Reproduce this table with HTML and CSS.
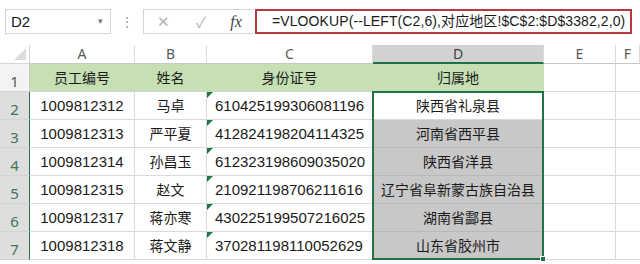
FILE: index.html
```html
<!DOCTYPE html>
<html lang="zh-CN">
<head>
    <meta charset="UTF-8">
    <title>对应地区查询</title>
    <link rel="stylesheet" href="styles.css">
</head>
<body>
<div class="toolbar">
    <div class="name-box">D2<span class="caret">▾</span></div>
    <div class="grip">⋮</div>
    <div class="fx-box">
        <span class="fx-btn">✕</span>
        <span class="fx-btn">✓</span>
        <span class="fx-label">fx</span>
    </div>
    <div class="formula">=VLOOKUP(--LEFT(C2,6),对应地区!$C$2:$D$3382,2,0)</div>
</div>

<div class="sheet">
    <div class="corner"><span class="tri"></span></div>
    <div class="col-head">A</div>
    <div class="col-head">B</div>
    <div class="col-head">C</div>
    <div class="col-head sel">D</div>
    <div class="col-head">E</div>
    <div class="col-head last">F</div>

    <div class="row-head">1</div>
    <div class="cell title cn">员工编号</div>
    <div class="cell title cn">姓名</div>
    <div class="cell title cn">身份证号</div>
    <div class="cell title cn">归属地</div>
    <div class="cell"></div>
    <div class="cell last"></div>

    <div class="row-head sel">2</div>
    <div class="cell num">1009812312</div>
    <div class="cell cn">马卓</div>
    <div class="cell id">610425199306081196</div>
    <div class="cell cn active">陕西省礼泉县</div>
    <div class="cell"></div>
    <div class="cell last"></div>

    <div class="row-head sel">3</div>
    <div class="cell num">1009812313</div>
    <div class="cell cn">严平夏</div>
    <div class="cell id">412824198204114325</div>
    <div class="cell cn picked">河南省西平县</div>
    <div class="cell"></div>
    <div class="cell last"></div>

    <div class="row-head sel">4</div>
    <div class="cell num">1009812314</div>
    <div class="cell cn">孙昌玉</div>
    <div class="cell id">612323198609035020</div>
    <div class="cell cn picked">陕西省洋县</div>
    <div class="cell"></div>
    <div class="cell last"></div>

    <div class="row-head sel">5</div>
    <div class="cell num">1009812315</div>
    <div class="cell cn">赵文</div>
    <div class="cell id">210921198706211616</div>
    <div class="cell cn picked">辽宁省阜新蒙古族自治县</div>
    <div class="cell"></div>
    <div class="cell last"></div>

    <div class="row-head sel">6</div>
    <div class="cell num">1009812317</div>
    <div class="cell cn">蒋亦寒</div>
    <div class="cell id">430225199507216025</div>
    <div class="cell cn picked">湖南省酃县</div>
    <div class="cell"></div>
    <div class="cell last"></div>

    <div class="row-head sel">7</div>
    <div class="cell num">1009812318</div>
    <div class="cell cn">蒋文静</div>
    <div class="cell id">370281198110052629</div>
    <div class="cell cn picked">山东省胶州市</div>
    <div class="cell"></div>
    <div class="cell last"></div>

    <div class="selection"><span class="handle"></span></div>
</div>
</body>
</html>
```

FILE: styles.css
```css
* {
    box-sizing: border-box;
}

body {
    margin: 0;
    width: 640px;
    height: 264px;
    overflow: hidden;
    background: #fff;
    font-family: "Liberation Sans", "Noto Sans CJK SC", sans-serif;
    color: #1a1a1a;
}

/* formula bar */
.toolbar {
    display: flex;
    align-items: center;
    height: 45px;
    padding: 0 0 2px 5px;
}

.name-box {
    position: relative;
    width: 106px;
    height: 25px;
    border: 1px solid #d4d4d4;
    font-size: 15px;
    line-height: 23px;
    padding-left: 5px;
}

.name-box .caret {
    position: absolute;
    right: 7px;
    top: 0;
    font-size: 9px;
    color: #777;
}

.grip {
    width: 32px;
    text-align: center;
    font-size: 14px;
    color: #a0a0a0;
}

.fx-box {
    display: flex;
    align-items: center;
    width: 110px;
    height: 25px;
    border: 1px solid #d4d4d4;
    border-right: none;
    margin-right: 2px;
}

.fx-btn {
    width: 38px;
    text-align: center;
    font-size: 15px;
    color: #b4b4b4;
}

.fx-label {
    width: 32px;
    text-align: center;
    font-family: "Liberation Serif", serif;
    font-style: italic;
    font-size: 16px;
    color: #444;
}

.formula {
    width: 377px;
    height: 25px;
    border: 2px solid #b8383c;
    padding-left: 15px;
    font-size: 14px;
    letter-spacing: 0.1px;
    line-height: 21px;
    white-space: nowrap;
    overflow: hidden;
}

/* sheet grid */
.sheet {
    position: relative;
    display: grid;
    grid-template-columns: 30px 105px 72px 166px 171px 72px 1fr;
    grid-template-rows: 19px repeat(7, 28px) 4px;
}

.corner {
    position: relative;
    border-right: 1px solid #d4d4d4;
    border-bottom: 1px solid #d4d4d4;
}

.corner .tri {
    position: absolute;
    right: 3px;
    bottom: 3px;
    width: 0;
    height: 0;
    border-left: 12px solid transparent;
    border-bottom: 12px solid #dcdcdc;
}

.col-head {
    text-align: center;
    font-family: "Noto Sans", sans-serif;
    font-size: 14px;
    line-height: 18px;
    color: #5a5a5a;
    border-right: 1px solid #dadada;
    border-bottom: 1px solid #c8c8c8;
}

.col-head.sel {
    background: #d2d2d2;
    border-bottom: 2px solid #217346;
    color: #3f3f3f;
}

.row-head {
    font-family: "Noto Sans", sans-serif;
    font-size: 15px;
    color: #555;
    text-align: center;
    line-height: 34px;
    background: #f3f3f3;
    border-bottom: 1px solid #d4d4d4;
    border-right: 1px solid #c8c8c8;
}

.row-head.sel {
    background: #dedede;
    color: #40735a;
    border-right: 1px solid #217346;
}

.cell {
    position: relative;
    font-size: 15px;
    line-height: 27px;
    white-space: nowrap;
    border-right: 1px solid #d9d9d9;
    border-bottom: 1px solid #d9d9d9;
}

.cell.last {
    border-right: none;
}

.cell.num,
.cell.cn {
    text-align: center;
}

.cell.cn {
    font-family: "Noto Sans CJK SC", sans-serif;
    font-size: 14px;
}

.cell.id {
    padding-left: 8px;
}

/* little green "number stored as text" marker */
.cell.id::before {
    content: "";
    position: absolute;
    left: 0;
    top: 0;
    border-top: 6px solid #1d7a3a;
    border-right: 6px solid transparent;
}

.cell.title {
    background: #c6e0b4;
    border-right-color: #c6e0b4;
    border-bottom-color: #d4d4d4;
}

.cell.picked {
    background: #c8c8c8;
    border-bottom-color: #b8b8b8;
}

/* selected range D2:D7, drawn over the cells without taking a grid slot */
.selection {
    position: absolute;
    grid-column: 5 / 6;
    grid-row: 3 / 9;
    top: -1px;
    left: -1px;
    right: 0;
    bottom: 0;
    border: 2px solid #217346;
    pointer-events: none;
}

.selection .handle {
    position: absolute;
    right: -4px;
    bottom: -4px;
    width: 6px;
    height: 6px;
    background: #217346;
    border: 1px solid #fff;
}
```
